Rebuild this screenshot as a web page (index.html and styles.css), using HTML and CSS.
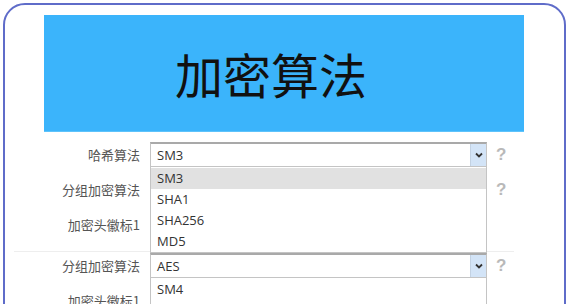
FILE: index.html
```html
<!DOCTYPE html>
<html lang="zh-CN">
<head>
    <meta charset="UTF-8">
    <meta name="viewport" content="width=device-width, initial-scale=1.0">
    <title>加密算法</title>
    <link rel="stylesheet" href="styles.css">
</head>
<body>
    <div class="frame">
        <div class="banner">加密算法</div>

        <div class="row">
            <label class="label">哈希算法</label>
            <div class="field">
                <div class="select"><span>SM3</span><span class="arrow"><svg width="8" height="6" viewBox="0 0 8 6"><path d="M1 1.5 L4 4.5 L7 1.5" fill="none" stroke="#333" stroke-width="1.8"/></svg></span></div>
                <ul class="dropdown">
                    <li class="active">SM3</li>
                    <li>SHA1</li>
                    <li>SHA256</li>
                    <li>MD5</li>
                </ul>
            </div>
            <span class="help">?</span>
        </div>
        <div class="row">
            <label class="label">分组加密算法</label>
            <div class="field">
                <div class="select"></div>
            </div>
            <span class="help">?</span>
        </div>
        <div class="row">
            <label class="label">加密头徽标1</label>
            <div class="field">
                <div class="select"></div>
            </div>
            <span class="help"></span>
        </div>

        <hr class="sep">

        <div class="row first">
            <label class="label">分组加密算法</label>
            <div class="field">
                <div class="select"><span>AES</span><span class="arrow"><svg width="8" height="6" viewBox="0 0 8 6"><path d="M1 1.5 L4 4.5 L7 1.5" fill="none" stroke="#333" stroke-width="1.8"/></svg></span></div>
                <ul class="dropdown">
                    <li>SM4</li>
                    <li>AES</li>
                </ul>
            </div>
            <span class="help">?</span>
        </div>
        <div class="row">
            <label class="label">加密头徽标1</label>
            <div class="field">
                <div class="select"></div>
            </div>
            <span class="help"></span>
        </div>
    </div>
</body>
</html>
```

FILE: styles.css
```css
body {
    margin: 0;
    background: #fff;
    font-family: 'Noto Sans CJK SC', sans-serif;
    overflow: hidden;
}
.frame {
    margin: 3px;
    border: 2px solid #5f6cc9;
    border-radius: 22px;
    padding: 10px 0 0 39px;
    height: 500px;
}
.banner {
    width: 480px;
    height: 117px;
    background: #3bb4fb;
    border-bottom: 1px solid #5ec3fb;
    box-sizing: border-box;
    color: #111;
    font-size: 48px;
    line-height: 117px;
    text-align: center;
    padding-right: 26px;
}
.row {
    display: flex;
    align-items: center;
    height: 25px;
    margin-top: 10px;
}
.row.first {
    margin-top: 1px;
}
.label {
    width: 96px;
    text-align: right;
    font-size: 13px;
    color: #555;
    margin-right: 10px;
}
.field {
    position: relative;
    width: 337px;
    height: 25px;
}
.select {
    box-sizing: border-box;
    height: 25px;
    border: 1px solid #c4c4c4;
    border-top: 2px solid #a9a9a9;
    display: flex;
    align-items: center;
    justify-content: space-between;
    padding-left: 6px;
    font-family: 'Open Sans', sans-serif;
    font-size: 13px;
    color: #333;
    background: #fff;
}
.arrow {
    width: 15px;
    height: 100%;
    background: #d3e4f7;
    border-left: 1px solid #c3d2e3;
    display: flex;
    align-items: center;
    justify-content: center;
}
.dropdown {
    position: absolute;
    top: 25px;
    left: 0;
    right: 0;
    z-index: 2;
    margin: 0;
    padding: 1px 0 0;
    list-style: none;
    background: #fff;
    border: 1px solid #c4c4c4;
    border-top: none;
    box-sizing: border-box;
    height: 86px;
    font-family: 'Open Sans', sans-serif;
    font-size: 13px;
    color: #333;
}
.dropdown li {
    height: 21px;
    line-height: 21px;
    padding-left: 6px;
}
.dropdown li.active {
    background: #e1e1e1;
}
.help {
    width: 10px;
    margin-left: 9px;
    font-family: 'Liberation Sans', sans-serif;
    font-weight: bold;
    font-size: 17px;
    color: #b9b9b9;
}
.sep {
    width: 500px;
    margin: 14px 0 0 -30px;
    border: none;
    border-top: 1px solid #eee;
    height: 0;
}
```
